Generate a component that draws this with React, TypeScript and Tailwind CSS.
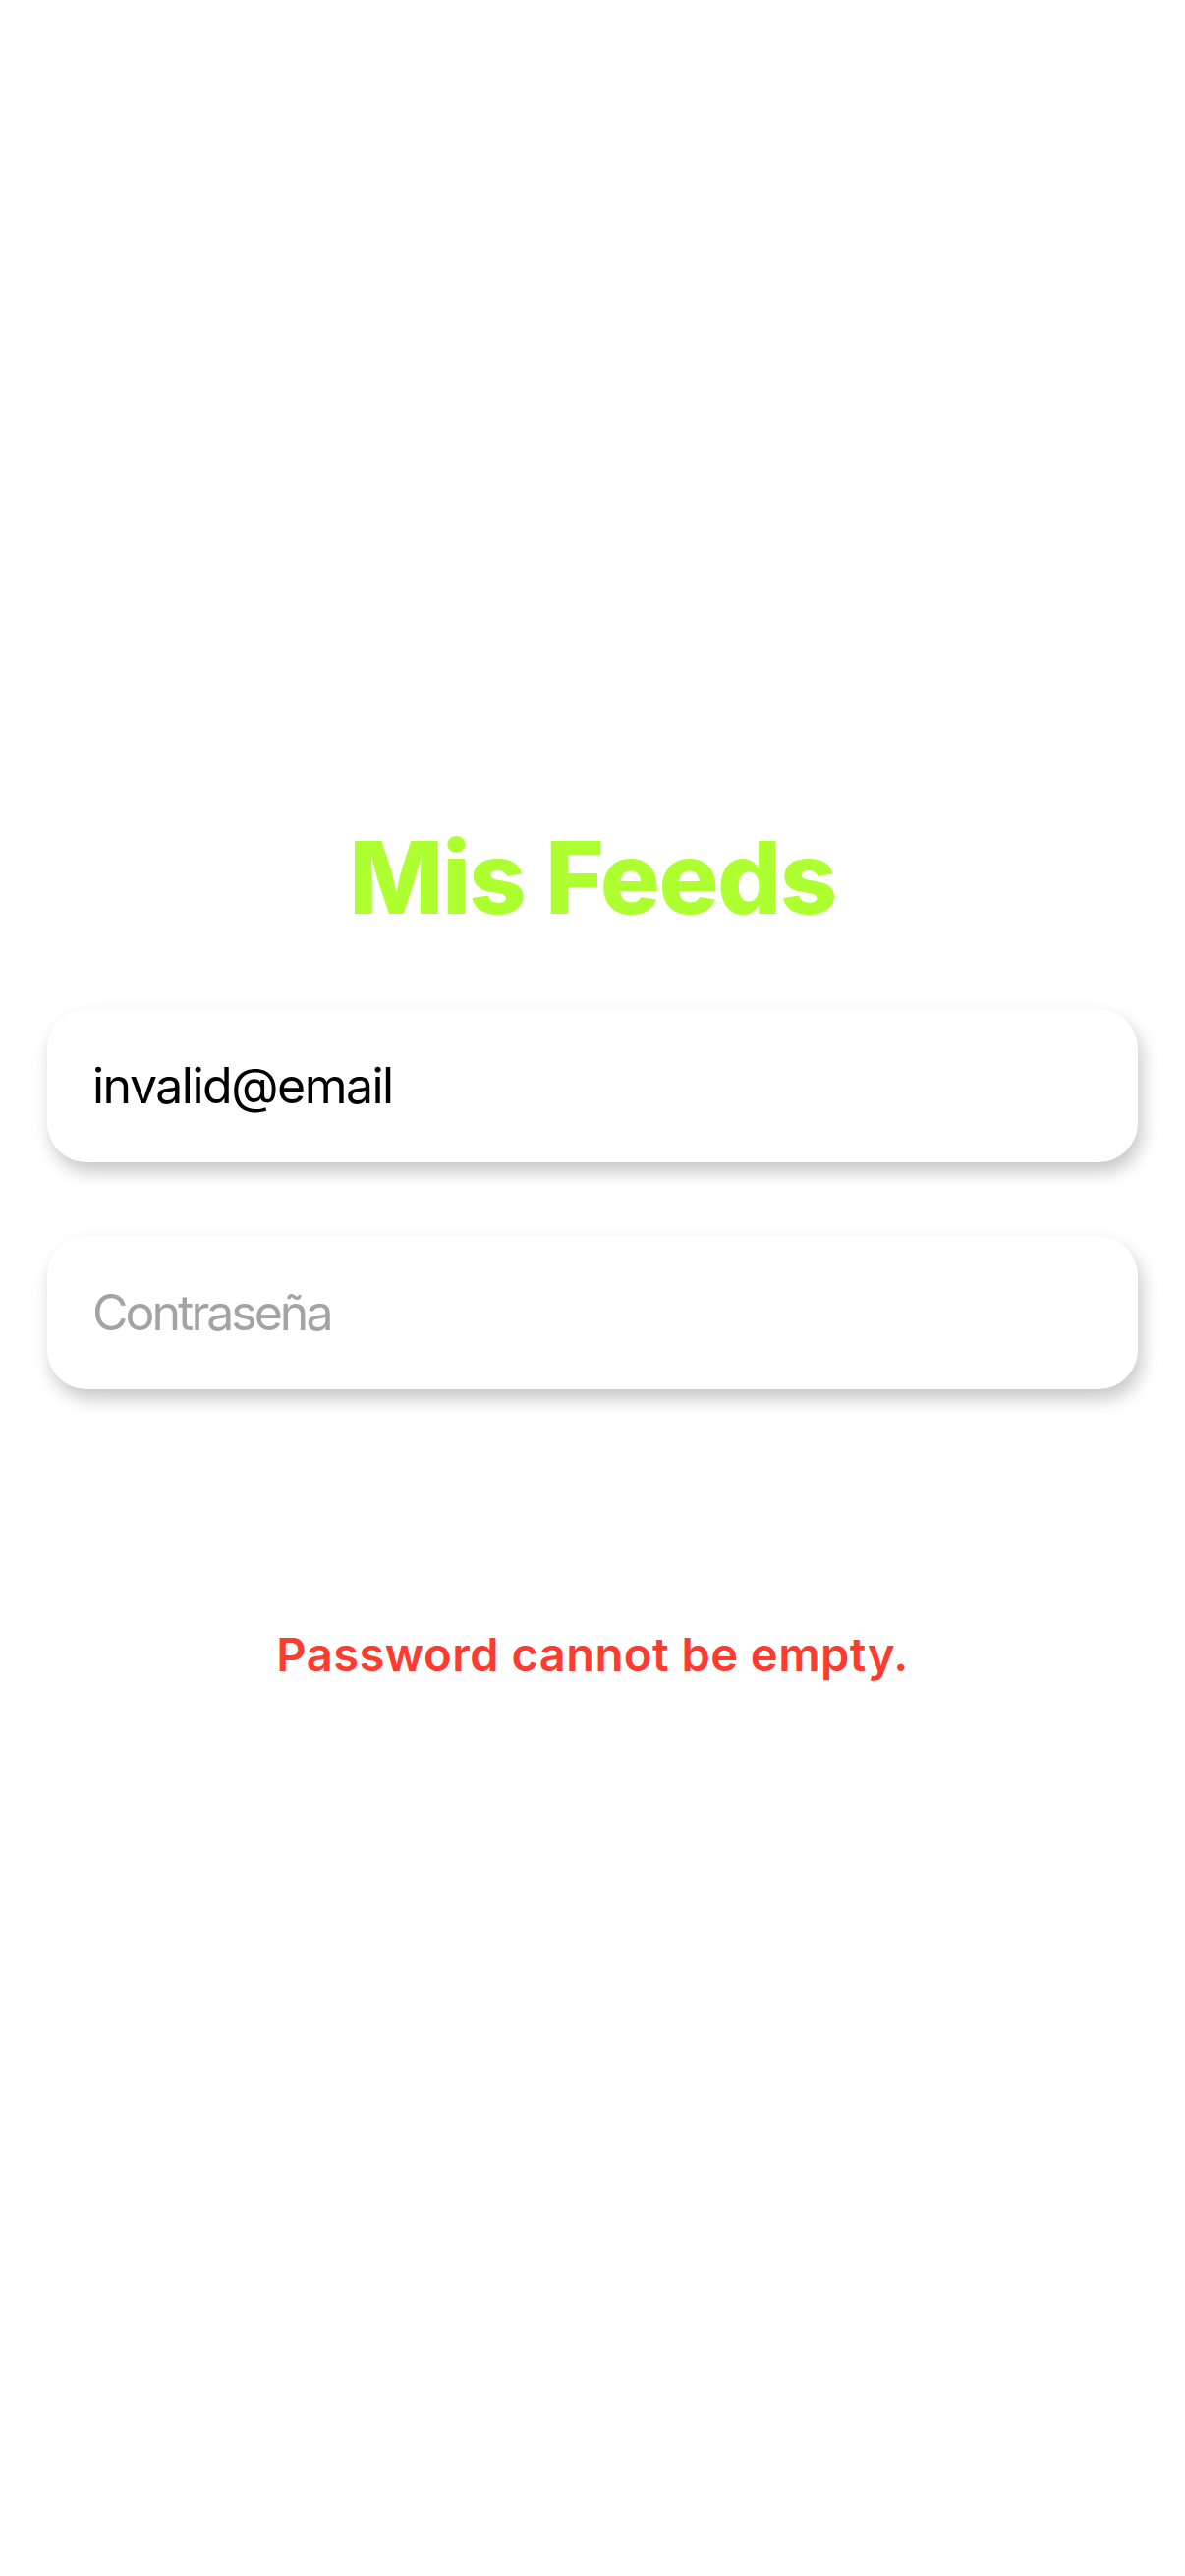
import { useState } from "react";

const font = { fontFamily: "Inter, 'Noto Sans', sans-serif" };

export default function App() {
  const [email, setEmail] = useState("invalid@email");
  const [password, setPassword] = useState("");

  return (
    <div
      className="flex min-h-[2622px] w-full flex-col items-center bg-white"
      style={font}
    >
      <h1 className="mt-[842px] text-[102px] leading-none font-extrabold tracking-[-1.5px] text-[#adff2f]">
        Mis Feeds
      </h1>

      <div className="mt-[83px] flex w-full flex-col gap-[75px] px-12">
        <input
          className="h-[156px] w-full rounded-[40px] bg-white px-[46px] text-[50px] tracking-[-1.5px] text-black shadow-[4px_10px_18px_rgba(0,0,0,0.22)] outline-none placeholder:tracking-[-3px] placeholder:text-[#a3a3a6]"
          value={email}
          onChange={(e) => setEmail(e.target.value)}
          placeholder="Correo"
        />
        <input
          type="password"
          className="h-[156px] w-full rounded-[40px] bg-white px-[46px] text-[50px] tracking-[-1.5px] text-black shadow-[4px_10px_18px_rgba(0,0,0,0.22)] outline-none placeholder:tracking-[-3px] placeholder:text-[#a3a3a6]"
          value={password}
          onChange={(e) => setPassword(e.target.value)}
          placeholder="Contraseña"
        />
      </div>

      <p className="mt-[246px] text-[47px] leading-none font-semibold tracking-[0.5px] text-[#ff3b30]">
        Password cannot be empty.
      </p>
    </div>
  );
}
